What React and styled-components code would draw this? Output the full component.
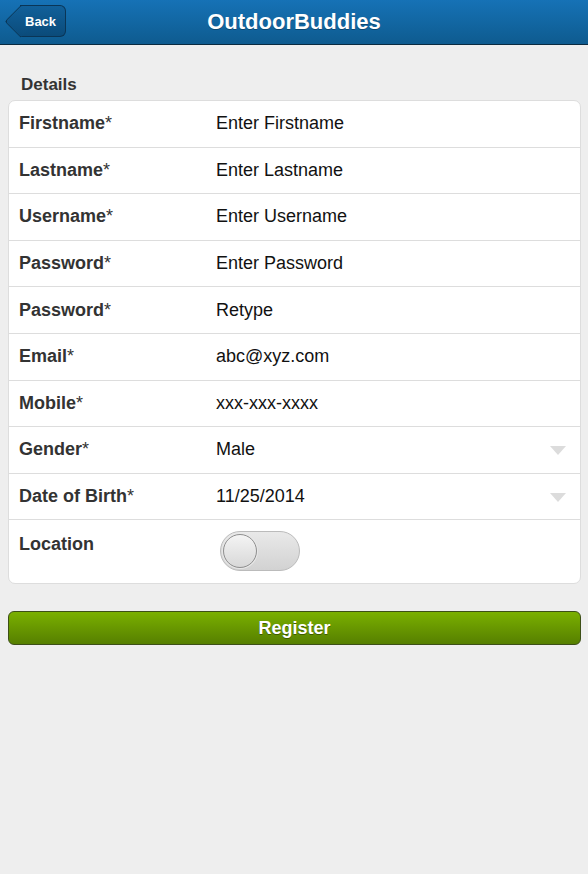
import styled, { createGlobalStyle } from 'styled-components'

const GlobalStyle = createGlobalStyle`
    html, body {
        margin: 0;
        padding: 0;
        background: #eeeeee;
        font-family: "Liberation Sans", Arial, sans-serif;
    }
`

const fields = [
    { label: 'Firstname', value: 'Enter Firstname', required: true },
    { label: 'Lastname', value: 'Enter Lastname', required: true },
    { label: 'Username', value: 'Enter Username', required: true },
    { label: 'Password', value: 'Enter Password', required: true },
    { label: 'Password', value: 'Retype', required: true },
    { label: 'Email', value: 'abc@xyz.com', required: true },
    { label: 'Mobile', value: 'xxx-xxx-xxxx', required: true },
    { label: 'Gender', value: 'Male', required: true, select: true },
    { label: 'Date of Birth', value: '11/25/2014', required: true, select: true },
]

function App() {
    return (
        <>
            <GlobalStyle />
            <Page>
                <Header>
                    <BackButton>
                        <span>Back</span>
                    </BackButton>
                    <Title>OutdoorBuddies</Title>
                </Header>
                <Content>
                    <SectionLabel>Details</SectionLabel>
                    <Card>
                        {fields.map((f, i) => (
                            <Row key={i}>
                                <Label>
                                    {f.label}
                                    {f.required && <Star>*</Star>}
                                </Label>
                                <Value>{f.value}</Value>
                                {f.select && <Caret />}
                            </Row>
                        ))}
                        <Row $tall>
                            <Label $top>Location</Label>
                            <Toggle>
                                <Knob />
                            </Toggle>
                        </Row>
                    </Card>
                    <RegisterButton>Register</RegisterButton>
                </Content>
            </Page>
        </>
    )
}

const Page = styled.div`
    min-height: 874px;
    background: #eeeeee;
`

const Header = styled.header`
    position: relative;
    height: 44px;
    display: flex;
    align-items: center;
    justify-content: center;
    background: linear-gradient(to bottom, #1672b6, #0e5b8f);
    border-bottom: 1px solid #0a2a40;
`

const Title = styled.h1`
    margin: 0;
    color: #fff;
    font-size: 22px;
    font-weight: bold;
    text-shadow: 0 1px 0 #0b4770;
`

const BackButton = styled.div`
    position: absolute;
    left: 20px;
    top: 5px;
    height: 32px;
    width: 46px;
    box-sizing: border-box;
    padding-left: 5px;
    display: flex;
    align-items: center;
    color: #fff;
    font-size: 13px;
    font-weight: bold;
    background: linear-gradient(to bottom, #11609a, #0b4b7a);
    border: 1px solid #0a3556;
    border-left: none;
    border-radius: 0 6px 6px 0;

    &::before {
        content: '';
        position: absolute;
        left: -11px;
        top: 4px;
        width: 22px;
        height: 22px;
        transform: rotate(45deg);
        background: linear-gradient(135deg, #11609a, #0b4b7a);
        border-left: 1px solid #0a3556;
        border-bottom: 1px solid #0a3556;
        border-radius: 0 0 0 4px;
    }

    & > span {
        position: relative;
        z-index: 1;
    }
`

const Content = styled.main`
    padding: 30px 7px 0 8px;
    display: flex;
    flex-direction: column;
`

const SectionLabel = styled.div`
    font-size: 17px;
    font-weight: bold;
    color: #333;
    padding-left: 13px;
    margin-bottom: 5px;
`

const Card = styled.div`
    background: #fff;
    border: 1px solid #dddddd;
    border-radius: 7px;
    overflow: hidden;
`

const Row = styled.div`
    position: relative;
    display: flex;
    align-items: ${(p) => (p.$tall ? 'flex-start' : 'center')};
    height: ${(p) => (p.$tall ? '63px' : '46.6px')};
    padding: ${(p) => (p.$tall ? '11px 10px 0' : '0 10px')};
    box-sizing: border-box;
    border-bottom: 1px solid #dddddd;

    &:last-child {
        border-bottom: none;
    }
`

const Label = styled.div`
    width: 197px;
    flex-shrink: 0;
    margin-top: ${(p) => (p.$top ? '3px' : '0')};
    font-size: 18px;
    font-weight: bold;
    color: #333;
`

const Star = styled.span`
    font-weight: normal;
`

const Value = styled.div`
    font-size: 18px;
    color: #111;
`

const Caret = styled.div`
    position: absolute;
    right: 14px;
    top: 50%;
    margin-top: -4px;
    width: 0;
    height: 0;
    border-left: 8px solid transparent;
    border-right: 8px solid transparent;
    border-top: 9px solid #dcdcdc;
`

const Toggle = styled.div`
    width: 80px;
    height: 40px;
    box-sizing: border-box;
    border-radius: 20px;
    border: 1px solid #bbbbbb;
    background: linear-gradient(to bottom, #e9e9e9, #d2d2d2);
    display: flex;
    align-items: center;
    padding-left: 2px;
    margin-left: 4px;
`

const Knob = styled.div`
    width: 34px;
    height: 34px;
    border-radius: 50%;
    box-sizing: border-box;
    border: 1px solid #8f8f8f;
    background: linear-gradient(to bottom, #f4f4f4, #d8d8d8);
    box-shadow: 0 0 0 1px #e8e8e8;
`

const RegisterButton = styled.button`
    margin-top: 27px;
    height: 34px;
    width: 100%;
    border: 1px solid #3d4f17;
    border-radius: 6px;
    background: linear-gradient(to bottom, #7ab000, #567f00);
    color: #fff;
    font-family: "Liberation Sans", Arial, sans-serif;
    font-size: 18px;
    font-weight: bold;
    text-shadow: 0 1px 0 #3d5a00;
`

export default App
